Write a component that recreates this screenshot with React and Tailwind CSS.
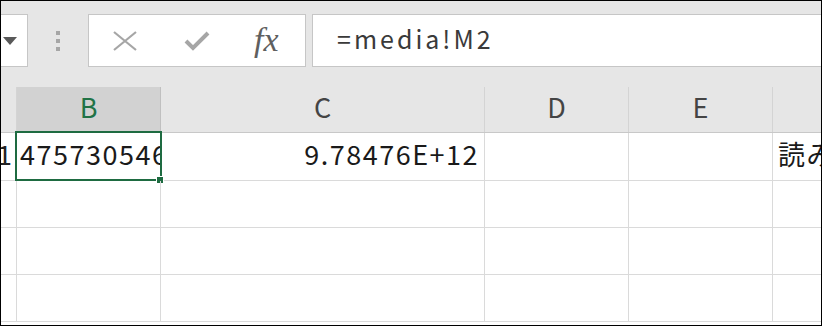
import React from "react";

const font = { fontFamily: '"Noto Sans CJK JP", "Noto Sans", sans-serif' };

function XIcon() {
  return (
    <svg width="26" height="20" viewBox="0 0 26 20">
      <path d="M2 1 L24 19 M24 1 L2 19" stroke="#a6a6a6" strokeWidth="2.2" fill="none" />
    </svg>
  );
}

function CheckIcon() {
  return (
    <svg width="26" height="22" viewBox="0 0 26 22">
      <path d="M2 11 L9 18 L24 3" stroke="#a6a6a6" strokeWidth="4" fill="none" strokeLinejoin="miter" />
    </svg>
  );
}

export default function App() {
  return (
    <div
      className="w-[822px] h-[326px] border border-black bg-[#e6e6e6] overflow-hidden flex flex-col"
      style={font}
    >
      {/* formula bar */}
      <div className="flex items-start h-[86px] pt-[13px] shrink-0">
        <div className="w-[27px] h-[53px] bg-white border border-l-0 border-[#c6c6c6] flex items-center justify-start pl-[2px]">
          <svg width="14" height="8" viewBox="0 0 14 8">
            <path d="M0 0 L14 0 L7 8 Z" fill="#595959" />
          </svg>
        </div>
        <div className="w-[60px] h-[53px] flex flex-col items-center justify-center gap-[4px]">
          <div className="w-[4px] h-[4px] bg-[#a6a6a6]" />
          <div className="w-[4px] h-[4px] bg-[#a6a6a6]" />
          <div className="w-[4px] h-[4px] bg-[#a6a6a6]" />
        </div>
        <div className="w-[218px] h-[53px] bg-white border border-[#c6c6c6] flex items-center pl-[23px]">
          <XIcon />
          <div className="ml-[46px]">
            <CheckIcon />
          </div>
          <div
            className="ml-[44px] text-[34px] italic text-[#5f5f5f] leading-none pb-[2px]"
            style={{ fontFamily: '"Liberation Serif", serif' }}
          >
            fx
          </div>
        </div>
        <div className="flex-1 ml-[6px] h-[53px] bg-white border border-r-0 border-[#c6c6c6] flex items-center pl-[24px] pb-[3px] text-[25px] text-[#3a3a3a] tracking-[3px]">
          =media!M2
        </div>
      </div>

      {/* column headers */}
      <div className="flex h-[46px] shrink-0 border-b border-[#c8c8c8] text-[27px] text-[#444444]">
        <div className="w-[16px] border-r border-[#d4d4d4]" />
        <div className="w-[144px] bg-[#d2d2d2] border-r border-[#c0c0c0] flex items-center justify-center pb-[5px] text-[#217346]">
          B
        </div>
        <div className="w-[324px] border-r border-[#d4d4d4] flex items-center justify-center pb-[5px]">C</div>
        <div className="w-[144px] border-r border-[#d4d4d4] flex items-center justify-center pb-[5px]">D</div>
        <div className="w-[144px] border-r border-[#d4d4d4] flex items-center justify-center pb-[5px]">E</div>
        <div className="flex-1" />
      </div>

      {/* rows */}
      <div className="flex-1 bg-white text-[27px] text-[#1a1a1a] tracking-[1.5px]">
        {[48, 47, 47, 47].map((h, i) => (
          <div
            key={i}
            className={
              "flex border-b border-[#dadada] " + (i === 0 ? "h-[48px]" : "h-[47px]")
            }
          >
            <div className="w-[16px] border-r border-[#dadada] overflow-hidden flex items-center justify-end pb-[4px]">
              {i === 0 ? <span className="text-[27px] text-[#222222] mr-[4px] tracking-normal">1</span> : null}
            </div>
            <div className="w-[144px] border-r border-[#dadada] relative">
              {i === 0 ? (
                <>
                  <div className="h-full overflow-hidden flex items-center pl-[3px] pb-[4px] whitespace-nowrap">
                    475730546
                  </div>
                  <div className="absolute left-[-2px] top-[-2px] w-[147px] h-[50px] border-2 border-[#1e6b41]" />
                  <div className="absolute right-[-4px] bottom-[-4px] w-[8px] h-[8px] bg-[#1e6b41] border border-white" />
                </>
              ) : null}
            </div>
            <div className="w-[324px] border-r border-[#dadada] flex items-center justify-end pr-[5px] pb-[4px]">
              {i === 0 ? "9.78476E+12" : ""}
            </div>
            <div className="w-[144px] border-r border-[#dadada]" />
            <div className="w-[144px] border-r border-[#dadada]" />
            <div className="flex-1 overflow-hidden flex items-center pl-[5px] pb-[4px] whitespace-nowrap">
              {i === 0 ? "読み込み" : ""}
            </div>
          </div>
        ))}
      </div>
    </div>
  );
}
